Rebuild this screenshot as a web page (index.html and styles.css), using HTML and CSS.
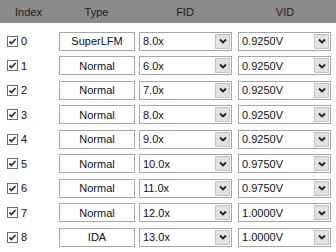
FILE: index.html
```html
<!DOCTYPE html>
<html lang="en">
<head>
    <meta charset="UTF-8">
    <title>P-States</title>
    <link rel="stylesheet" href="styles.css">
</head>
<body>
<div class="table">
    <div class="head">
        <span>Index</span>
        <span>Type</span>
        <span>FID</span>
        <span>VID</span>
    </div>

    <div class="rows">
        <div class="row">
            <div class="idx"><span class="check"></span>0</div>
            <div class="type">SuperLFM</div>
            <div class="drop">8.0x<span class="btn"></span></div>
            <div class="drop">0.9250V<span class="btn"></span></div>
        </div>
        <div class="row">
            <div class="idx"><span class="check"></span>1</div>
            <div class="type">Normal</div>
            <div class="drop">6.0x<span class="btn"></span></div>
            <div class="drop">0.9250V<span class="btn"></span></div>
        </div>
        <div class="row">
            <div class="idx"><span class="check"></span>2</div>
            <div class="type">Normal</div>
            <div class="drop">7.0x<span class="btn"></span></div>
            <div class="drop">0.9250V<span class="btn"></span></div>
        </div>
        <div class="row">
            <div class="idx"><span class="check"></span>3</div>
            <div class="type">Normal</div>
            <div class="drop">8.0x<span class="btn"></span></div>
            <div class="drop">0.9250V<span class="btn"></span></div>
        </div>
        <div class="row">
            <div class="idx"><span class="check"></span>4</div>
            <div class="type">Normal</div>
            <div class="drop">9.0x<span class="btn"></span></div>
            <div class="drop">0.9250V<span class="btn"></span></div>
        </div>
        <div class="row">
            <div class="idx"><span class="check"></span>5</div>
            <div class="type">Normal</div>
            <div class="drop">10.0x<span class="btn"></span></div>
            <div class="drop">0.9750V<span class="btn"></span></div>
        </div>
        <div class="row">
            <div class="idx"><span class="check"></span>6</div>
            <div class="type">Normal</div>
            <div class="drop">11.0x<span class="btn"></span></div>
            <div class="drop">0.9750V<span class="btn"></span></div>
        </div>
        <div class="row">
            <div class="idx"><span class="check"></span>7</div>
            <div class="type">Normal</div>
            <div class="drop">12.0x<span class="btn"></span></div>
            <div class="drop">1.0000V<span class="btn"></span></div>
        </div>
        <div class="row">
            <div class="idx"><span class="check"></span>8</div>
            <div class="type">IDA</div>
            <div class="drop">13.0x<span class="btn"></span></div>
            <div class="drop">1.0000V<span class="btn"></span></div>
        </div>
    </div>
</div>
</body>
</html>
```

FILE: styles.css
```css
body {
    margin: 0;
    background-color: #fdfdfd;
    font-family: "Liberation Sans", Arial, sans-serif;
    font-size: 11px;
    color: #111;
}

.table {
    width: 336px;
}

.head,
.row {
    display: grid;
    grid-template-columns: 57px 79px 98px 102px;
}

.head {
    height: 23px;
    align-items: center;
    background-color: #8a8a8a;
    color: #1e1e1e;
    text-align: center;
}

.rows {
    padding-top: 6px;
}

.row {
    height: 24.5px;
    align-items: center;
}

.idx {
    display: flex;
    align-items: center;
    padding-left: 7px;
}

.check {
    width: 11px;
    height: 11px;
    margin-right: 3px;
    box-sizing: border-box;
    border: 1px solid #6a6a6a;
    background: #fff url("data:image/svg+xml,%3Csvg xmlns='http://www.w3.org/2000/svg' width='9' height='9'%3E%3Cpath d='M1.5 4.5 L3.5 6.5 L7.5 2' fill='none' stroke='%23333' stroke-width='1.8'/%3E%3C/svg%3E") no-repeat center;
}

.type {
    margin-left: 2px;
    width: 76px;
    height: 19px;
    box-sizing: border-box;
    border: 1px solid #a6a6a6;
    background: #fff;
    display: flex;
    align-items: center;
    justify-content: center;
}

.drop {
    position: relative;
    margin-left: 3px;
    width: 93px;
    height: 19px;
    box-sizing: border-box;
    border: 1px solid #a6a6a6;
    background: #fff;
    display: flex;
    align-items: center;
    padding-left: 3px;
}

.drop + .drop {
    margin-left: 4px;
}

.btn {
    position: absolute;
    top: 1px;
    right: 1px;
    width: 15px;
    height: 15px;
    box-sizing: border-box;
    border: 1px solid #c4c4c4;
    background: #e2e2e2 url("data:image/svg+xml,%3Csvg xmlns='http://www.w3.org/2000/svg' width='8' height='6'%3E%3Cpath d='M1 1.5 L4 4.5 L7 1.5' fill='none' stroke='%23222' stroke-width='1.8'/%3E%3C/svg%3E") no-repeat center;
}
```
